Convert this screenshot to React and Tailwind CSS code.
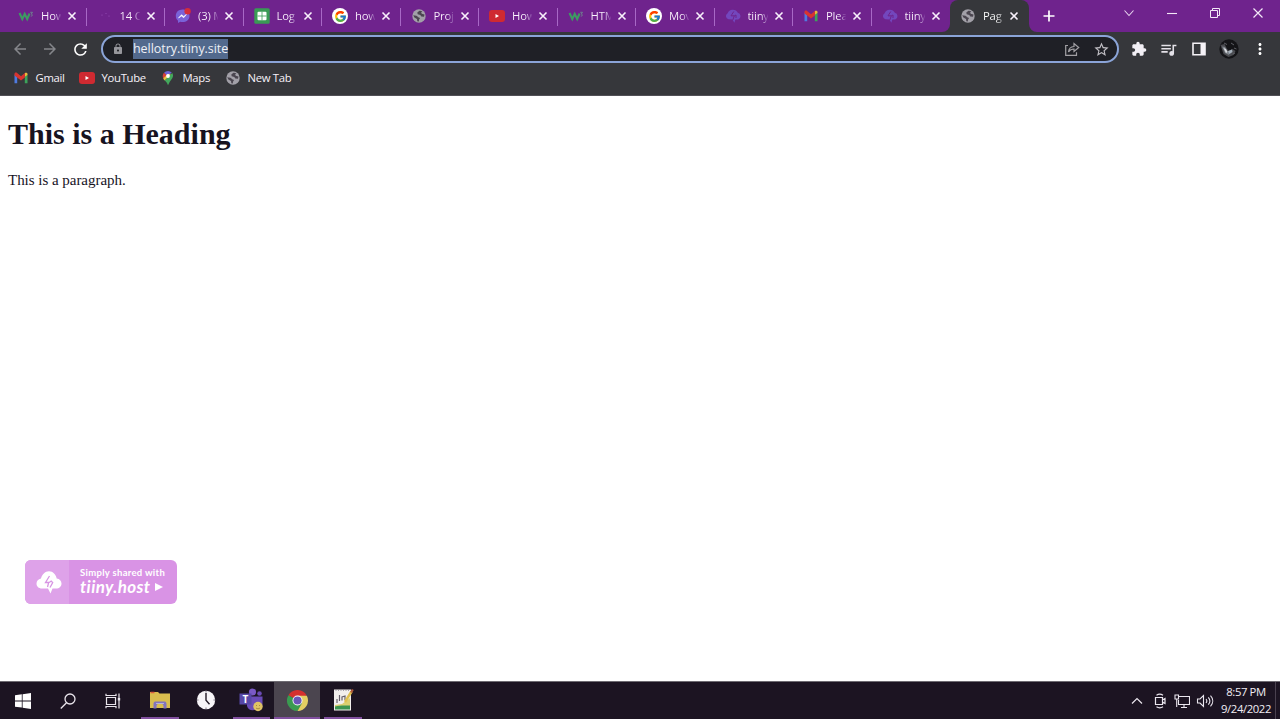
import React from 'react';
import {
  MdArrowBack,
  MdArrowForward,
  MdRefresh,
  MdLock,
  MdStarBorder,
  MdExtension,
  MdQueueMusic,
  MdMoreVert,
} from 'react-icons/md';
import { FcGoogle } from 'react-icons/fc';

/* ---------- favicons ---------- */

const W3Icon = () => (
  <svg viewBox="0 0 16 16" className="h-4 w-4" fill="none" stroke="#3d9a62" strokeWidth="2.1">
    <path d="M1.500 5 4.300 11l2.400-5L9.200 11l2.400-5.500" />
    <path d="M12.300 4.300h2.200L13.300 6c1.500.3 1.400 2.300-.5 2.200" stroke="#6f7f8f" strokeWidth="1" />
  </svg>
);

const DotsIcon = () => (
  <svg viewBox="0 0 16 16" className="h-4 w-4" fill="#9a52ba">
    <circle cx="5" cy="7" r=".6" />
    <circle cx="9" cy="5.500" r=".5" />
    <circle cx="12" cy="8" r=".6" />
  </svg>
);

const MessengerIcon = () => (
  <svg viewBox="0 0 16 16" className="h-4 w-4">
    <path d="M7.500 1.500C3.500 1.500.8 4.300.8 8c0 2 .9 3.600 2.200 4.700V15l2.200-1.200c4.800 1.200 9.300-1.500 9.300-5.900 0-3.700-3-6.400-7-6.400z" fill="#7a62d8" />
    <path d="m3.500 10 3-3.300 2.200 1.700 3-2.200-3 3.500-2.200-1.700z" fill="#fff" stroke="#fff" strokeWidth=".6" />
    <circle cx="12.600" cy="3.200" r="3.200" fill="#d32d3b" />
  </svg>
);

const SheetIcon = () => (
  <svg viewBox="0 0 16 16" className="h-4 w-4">
    <rect x=".3" y=".3" width="15.400" height="15.400" rx="1.500" fill="#3a9a55" />
    <rect x="3.500" y="3.700" width="9" height="8.600" rx="1" fill="#fff" />
    <path d="M8 3.700v8.600M3.500 8h9" stroke="#3a9a55" strokeWidth=".8" />
  </svg>
);

const GoogleIcon = () => (
  <span className="flex h-4 w-4 items-center justify-center rounded-full bg-white">
    <FcGoogle className="h-[13px] w-[13px]" />
  </span>
);

const YoutubeIcon = () => (
  <svg viewBox="0 0 16 16" className="h-4 w-4">
    <rect x="0" y="2" width="16" height="12" rx="3" fill="#cf2a31" />
    <path d="M6.500 6 10 8l-3.500 2z" fill="#fff" />
  </svg>
);

const GlobeIcon = () => (
  <svg viewBox="0 0 16 16" className="h-4 w-4">
    <circle cx="8" cy="8" r="6.700" fill="#a2a0a8" />
    <path d="M8.500 2.800 6.300 4.500l.4 1.800 2.600.7 1 1.500 2.700.2.500-2.200-2.800-.8-.5-1.500 1.200-.9a6 6 0 0 0-2.900-.5z" fill="#4b4650" />
    <path d="M2.200 7.300l3.300.4 2.200 1.800 1.400.6-1 1.500-.3 1.900-1.500-.2-.3-2.200-2.600-1.500z" fill="#4b4650" />
  </svg>
);

const TiinyIcon = () => (
  <svg viewBox="0 0 16 16" className="h-4 w-4">
    <path d="M3.500 11.300A3.300 3.300 0 0 1 2.600 5.200 5.600 5.600 0 0 1 12.800 4.700a3.500 3.500 0 0 1 .4 6.700l-2.800.2-1 3.200-2-3.400z" fill="#7347bd" />
    <path d="M8.800 3.500 6 7.800h3.300L7.800 12M9.300 7.800l1.700-.8v3" stroke="#6f238d" strokeWidth="1" fill="none" />
  </svg>
);

const GmailIcon = () => (
  <svg viewBox="0 0 16 16" className="h-4 w-4">
    <path d="M1.500 4.500v8.700h2.700V6z" fill="#4f7be0" />
    <path d="M14.500 4.500v8.700h-2.700V6z" fill="#3ca35a" />
    <path d="M11.800 3.800v3l2.700-1.700V4c0-1.300-1.700-1.700-2.700-.9z" fill="#e9b93c" />
    <path d="M1.500 4c0-1.300 1.600-1.800 2.600-1L8 6.200 11.900 3v4.500L8 10.600 4.100 7.600 1.500 5.600z" fill="#d8342f" />
  </svg>
);

const MapsIcon = () => (
  <svg viewBox="0 0 16 16" className="h-4 w-4">
    <path d="M8 1a5.300 5.300 0 0 0-4 1.800L7 6l4.800-3.300A5.300 5.300 0 0 0 8 1z" fill="#6f63d6" />
    <path d="M4 2.800A5.300 5.300 0 0 0 3.300 8.500L7 5.300z" fill="#d8403a" />
    <path d="M3.200 8.300c.3.800.9 1.600 1.500 2.300L11 4.500 8 4z" fill="#e8c040" />
    <path d="M12.200 3.100c2.200 3.600-.4 6-1.900 7.900-1 1.200-1.300 2.500-2.300 4.200-.8-2-1.700-3.200-3.300-4.600z" fill="#43a85c" />
    <circle cx="8" cy="6" r="1.900" fill="#fff" />
  </svg>
);

const CloseIcon = ({ className = '' }) => (
  <svg viewBox="0 0 10 10" className={`h-2.5 w-2.5 ${className}`} fill="none" stroke="#f8f0fb" strokeWidth="1.600">
    <path d="M1.500 1.500l7 7M8.500 1.500l-7 7" />
  </svg>
);

const tabs = [
  { icon: W3Icon, title: 'How' },
  { icon: DotsIcon, title: '14 C' },
  { icon: MessengerIcon, title: '(3) M' },
  { icon: SheetIcon, title: 'Log' },
  { icon: GoogleIcon, title: 'how' },
  { icon: GlobeIcon, title: 'Proj' },
  { icon: YoutubeIcon, title: 'How' },
  { icon: W3Icon, title: 'HTM' },
  { icon: GoogleIcon, title: 'Mov' },
  { icon: TiinyIcon, title: 'tiiny' },
  { icon: GmailIcon, title: 'Plea' },
  { icon: TiinyIcon, title: 'tiiny' },
  { icon: GlobeIcon, title: 'Pag', active: true },
];

const bookmarks = [
  { icon: GmailIcon, title: 'Gmail', width: 'w-[66px]' },
  { icon: YoutubeIcon, title: 'YouTube', width: 'w-[81px]' },
  { icon: MapsIcon, title: 'Maps', width: 'w-[65px]' },
  { icon: GlobeIcon, title: 'New Tab', width: 'w-[80px]' },
];

/* ---------- browser chrome ---------- */

const Tab = ({ icon: Icon, title, active, last }) => (
  <div
    className={`relative flex h-8 w-[78.500px] shrink-0 items-center pl-2.5 ${
      active ? 'rounded-t-lg bg-[#36373b]' : ''
    }`}
  >
    <Icon />
    <span
      className={`ml-[7px] w-[20px] overflow-hidden whitespace-nowrap bg-gradient-to-r from-65% bg-clip-text text-[11.300px] tracking-[-0.200px] text-transparent ${
        active ? 'from-white to-[#8b8c90]' : 'from-[#fbf3fd] to-[#7a3399]'
      }`}
    >
      {title}
    </span>
    <CloseIcon className="ml-[6px]" />
    {!active && !last && <span className="absolute right-0 top-2 h-[18px] w-px bg-[#a868c6]" />}
    {active && (
      <>
        <svg viewBox="0 0 8 8" className="absolute -left-2 bottom-0 h-2 w-2" fill="#36373b">
          <path d="M8 0v8H0a8 8 0 0 0 8-8z" />
        </svg>
        <svg viewBox="0 0 8 8" className="absolute -right-2 bottom-0 h-2 w-2" fill="#36373b">
          <path d="M0 0v8h8a8 8 0 0 1-8-8z" />
        </svg>
      </>
    )}
  </div>
);

const TabStrip = () => (
  <div className="flex h-8 shrink-0 bg-[#6f238d] pl-2">
    {tabs.map((tab, i) => (
      <Tab key={i} {...tab} last={i === tabs.length - 2} />
    ))}
    <svg viewBox="0 0 12 12" className="ml-[14px] mt-[10px] h-3 w-3" stroke="#fff" strokeWidth="1.700">
      <path d="M6 .5v11M.5 6h11" />
    </svg>
    <div className="ml-auto flex h-[26px] items-center gap-[31px] pr-4">
      <svg viewBox="0 0 12 12" className="h-3 w-3" fill="none" stroke="#e7d3ee" strokeWidth="1.100">
        <path d="M1.500 3.500 6 8.500l4.500-5" />
      </svg>
      <svg viewBox="0 0 12 12" className="h-3 w-3" fill="none" stroke="#f3e8f7" strokeWidth="1.100">
        <path d="M1 6.500h10" />
      </svg>
      <svg viewBox="0 0 12 12" className="h-3 w-3" fill="none" stroke="#f3e8f7">
        <path d="M1.500 3.500h7v7h-7zM3.500 3.500v-2h7v7h-2" />
      </svg>
      <svg viewBox="0 0 12 12" className="h-3 w-3" fill="none" stroke="#f3e8f7" strokeWidth="1.200">
        <path d="M1.500 1.500l9 9M10.500 1.500l-9 9" />
      </svg>
    </div>
  </div>
);

const Avatar = () => (
  <svg viewBox="0 0 20 20" className="h-5 w-5">
    <circle cx="10" cy="10" r="9.700" fill="#141417" />
    <path d="M1.500 6l4-1 2 4 2 3 4-2 3 2-2 4-5 2-5-3z" fill="#4a4b50" />
    <path d="M3 7.500l3 .5 2 4 3 1-1 3-4-2z" fill="#7d8289" />
    <path d="M4.500 9l2.500 1 1.500 3-1.500 1z" fill="#d9dbe0" />
    <path d="M9 12l4-1.500.500 2.500-3 2z" fill="#a5b0bb" />
    <path d="M5 4l3 1.500M12 4l3 2M15 9l2.500 1M14 15l2-1" stroke="#5e5f65" />
  </svg>
);

const Toolbar = () => (
  <div className="flex h-[34px] shrink-0 items-center bg-[#36373b] pl-[11px]">
    <div className="flex w-[90px] items-center gap-3">
      <MdArrowBack className="h-[18px] w-[18px] text-[#85868b]" />
      <MdArrowForward className="h-[18px] w-[18px] text-[#85868b]" />
      <MdRefresh className="h-[19px] w-[19px] text-white" stroke="white" />
    </div>
    <div className="flex h-7 w-[1018px] items-center rounded-full border-2 border-[#8ba4d8] bg-[#1f2026] px-[9px]">
      <MdLock className="h-3 w-3 text-[#96969c]" />
      <span className="ml-[9px] flex h-5 items-center bg-[#52698d] text-[12.500px] tracking-[-0.050px] text-[#eef0f6]">
        hellotry.tiiny.site
      </span>
      <svg viewBox="0 0 16 16" className="ml-auto h-4 w-4" fill="none" stroke="#a2a0a4" strokeWidth="1.200">
        <path d="M4 4.500H1.700v9.800h10.800v-3" />
        <path d="M4.500 11c.3-3.500 2-5.300 5.500-5.500V2.500l4.700 4-4.700 4V8c-2.500 0-4.300 1-5.500 3z" />
      </svg>
      <MdStarBorder className="-mr-[2px] ml-[13px] h-[17px] w-[17px] text-[#c0bec4]" />
    </div>
    <div className="ml-[12px] flex items-center">
      <MdExtension className="h-4 w-4 text-[#f2eff5]" />
      <MdQueueMusic className="ml-[12px] h-[19px] w-[19px] text-[#e4e1e8]" />
      <svg viewBox="0 0 14 14" className="ml-[14px] h-3.5 w-3.5" fill="none">
        <path d="M1 1.300h12v11.400H1z" stroke="#f5f2f7" strokeWidth="1.600" />
        <path d="M8.500 1H13v12H8.500z" fill="#f5f2f7" />
      </svg>
      <span className="ml-[13px]">
        <Avatar />
      </span>
      <MdMoreVert className="ml-[12px] h-[18px] w-[18px] text-white" />
    </div>
  </div>
);

const BookmarksBar = () => (
  <div className="flex h-[30px] shrink-0 border-b border-[#515056] bg-[#36373b] pb-[5px] pl-[13px]">
    {bookmarks.map(({ icon: Icon, title, width }) => (
      <div key={title} className={`flex items-center gap-[6.500px] ${width}`}>
        <Icon />
        <span className="whitespace-nowrap pt-px text-[11.300px] tracking-[-0.300px] text-[#f6f2f9]">{title}</span>
      </div>
    ))}
  </div>
);

/* ---------- page ---------- */

const SharedBadge = () => (
  <div className="absolute left-[25px] top-[464px] flex h-[44px] w-[152px] overflow-hidden rounded-md bg-[#d993e5] text-white">
    <div className="flex w-[44px] items-center justify-center bg-[#dea2e9] pl-1">
      <svg viewBox="0 0 26 24" className="h-6 w-[26px]">
        <path d="M6 18.500C2.500 18.500.5 16.200.5 13.500.5 11 2.300 9 5 8.500 6 4.500 9 1.200 13 1.200c4 0 7 3.400 7.700 7.200 3 .3 4.800 2.500 4.800 5.100 0 2.900-2 5-5.500 5h-3.500L14.500 23.500l-2.500-5z" fill="#fff" />
        <path d="M13.500 6 9.500 12.500h3.200L11.500 17M13.200 12.500l2-1.500 1.500 1.500-2.700 5" stroke="#d795e3" strokeWidth="1.300" fill="none" />
      </svg>
    </div>
    <div className="pl-[11px] pt-[8px] font-['Lato',sans-serif]">
      <div className="whitespace-nowrap text-[9.500px] font-bold leading-[10px] tracking-[0.300px]">Simply shared with</div>
      <div className="flex items-center gap-[5px] text-[17px] font-bold italic leading-[18px] tracking-[0.400px]">
        tiiny.host
        <svg viewBox="0 0 8 8" className="h-2 w-2" fill="#fff">
          <path d="M0 0l8 4-8 4z" />
        </svg>
      </div>
    </div>
  </div>
);

const Page = () => (
  <main className="relative flex-1 bg-white px-2 font-['Liberation_Serif',serif] text-[#17131f]">
    <h1 className="pt-5 text-[30px] font-bold leading-[35px]">This is a Heading</h1>
    <p className="mt-[21px] text-[15px] leading-[17px] tracking-[-0.030px]">This is a paragraph.</p>
    <SharedBadge />
  </main>
);

/* ---------- taskbar ---------- */

const StartIcon = () => (
  <svg viewBox="0 0 16 16" className="h-4 w-4" fill="#fff">
    <path d="M0 2.300 6.800 1.300v6.200H0zM7.600 1.200 16 0v7.500H7.600zM0 8.400h6.800v6.200L0 13.700zM7.600 8.400H16V16l-8.400-1.200z" />
  </svg>
);

const SearchIcon = () => (
  <svg viewBox="0 0 16 16" className="h-4 w-4" fill="none" stroke="#e9e5ec" strokeWidth="1.300">
    <circle cx="10" cy="6" r="5" />
    <path d="M6.500 9.800.8 15.500" />
  </svg>
);

const TaskViewIcon = () => (
  <svg viewBox="0 0 16 16" className="h-4 w-4" fill="none" stroke="#e9e5ec" strokeWidth="1.200">
    <path d="M1.500 4.500h9v7h-9zM1 .8v1.700h10V.8M1 15.200v-1.700h10v1.700M14 .5v15" />
    <path d="M12.800 5h2.400v2.500h-2.400z" fill="#e9e5ec" stroke="none" />
  </svg>
);

const ExplorerIcon = () => (
  <svg viewBox="0 0 22 20" className="h-5 w-[22px]">
    <path d="M1 2h8l1.500 1.500H21V18H1z" fill="#d9bd4e" />
    <path d="M1.500 2.500h4" stroke="#d85b3c" strokeWidth="1.500" />
    <path d="M4.500 18.500V14c0-2 1-2.500 2.500-2.500h8c1.500 0 2.500.5 2.500 2.500v4.500h-3V16a3.500 2.500 0 0 0-7 0v2.500z" fill="#8272bd" />
    <path d="M7 13.500h8" stroke="#b9b3d6" />
  </svg>
);

const ClockIcon = () => (
  <svg viewBox="0 0 20 20" className="h-5 w-5">
    <circle cx="10" cy="10" r="9.200" fill="#f7f5f8" />
    <path d="M10 3v7.300l3.500 4" stroke="#221a26" strokeWidth="1.400" fill="none" />
    <path d="M10 1v1.500M10 17.500V19M1 10h1.500M17.500 10H19" stroke="#77707c" />
  </svg>
);

const TeamsIcon = () => (
  <svg viewBox="0 0 24 24" className="h-6 w-6">
    <circle cx="13.500" cy="4" r="3.600" fill="#7b5ac6" />
    <circle cx="20.500" cy="5.500" r="2.300" fill="#6a4ab5" />
    <path d="M8 8.500h15.500V16a4 4 0 0 1-4 4H18c-2 3.500-9 3-10-2z" fill="#6b4cb8" />
    <path d="M.5 5.500h12v11H.5z" fill="#5748a8" />
    <text x="6.500" y="14.700" textAnchor="middle" fontSize="10" fontWeight="bold" fill="#fff">T</text>
    <circle cx="19" cy="18.500" r="4.700" fill="#dec266" />
    <path d="M17 17.500h1M20 17.500h1M17 20c1 1 3 1 4 0" stroke="#9a7c3a" strokeWidth=".8" fill="none" />
  </svg>
);

const ChromeIcon = () => (
  <svg viewBox="0 0 22 22" className="h-[21px] w-[21px]">
    <path d="M11 11 1.470 5.500A11 11 0 0 1 20.530 5.500z" fill="#d5302f" />
    <path d="M11 11 1.470 5.500A11 11 0 0 0 11 22l4.800-8.300z" fill="#3a9a50" />
    <path d="M11 6h9.800A11 11 0 0 1 11 22l4.800-8.300z" fill="#e3ce62" />
    <circle cx="11" cy="11" r="5.200" fill="#fff" />
    <circle cx="11" cy="11" r="4.300" fill="#6a55b8" />
  </svg>
);

const NotepadIcon = () => (
  <svg viewBox="0 0 22 24" className="h-6 w-[22px]">
    <path d="M2 1.500h17v21H2z" fill="#f2efed" />
    <path d="M3 17l7-1 8-6v9H3z" fill="#dcd070" />
    <path d="M3 18.500c5-1.500 10-1 15-1v4H3z" fill="#3d9550" />
    <path d="M5 15v-4M7.500 13V7M10 12.500V9l3-1v4" stroke="#66606b" strokeWidth="1.200" fill="none" />
    <path d="m13 14 6.500-10.500" stroke="#dfc04f" strokeWidth="2.500" />
    <path d="m19 4.500 1.800-3" stroke="#b05a3c" strokeWidth="2.200" />
    <path d="M3.500 2.500h14" stroke="#a5a0aa" strokeDasharray="1 1.500" />
  </svg>
);

const systemButtons = [
  { name: 'start', icon: StartIcon },
  { name: 'search', icon: SearchIcon },
  { name: 'task-view', icon: TaskViewIcon },
];

const apps = [
  { name: 'explorer', icon: ExplorerIcon, open: true },
  { name: 'clock', icon: ClockIcon },
  { name: 'teams', icon: TeamsIcon, open: true },
  { name: 'chrome', icon: ChromeIcon, open: true, active: true },
  { name: 'notepad', icon: NotepadIcon, open: true },
];

const Tray = () => (
  <div className="ml-auto flex items-center">
    <svg viewBox="0 0 12 12" className="h-3 w-3" fill="none" stroke="#eae6ee" strokeWidth="1.200">
      <path d="M1 8.500 6 3.500l5 5" />
    </svg>
    <svg viewBox="0 0 16 16" className="ml-[9px] h-4 w-4" fill="none" stroke="#eae6ee" strokeWidth="1.200">
      <path d="M3.500 4.500h7v7h-7zM10.500 7 13 5.500v5L10.500 9M4.500 2.200c2-1.300 4.500-1.300 6.500 0M4.500 13.800c2 1.300 4.500 1.300 6.500 0" />
    </svg>
    <svg viewBox="0 0 16 16" className="ml-[6px] h-4 w-4" fill="none" stroke="#eae6ee" strokeWidth="1.100">
      <path d="M5 3.500h10.500v8H4.500V7M10 11.500v3M7 14.500h6M1 2h3.500v4H1zM2.700 6v8" />
    </svg>
    <svg viewBox="0 0 18 16" className="ml-[6px] h-4 w-[18px]" fill="none" stroke="#eae6ee" strokeWidth="1.100">
      <path d="M1.500 6h2.500l3.500-3.500v11L4 10H1.500zM10 6c1 1.200 1 2.800 0 4M12.300 4.300c2 2.300 2 5.100 0 7.400M14.500 2.700c3 3.200 3 7.400 0 10.600" />
    </svg>
    <div className="ml-[6px] w-[52px] pb-[2px] text-center text-[11.300px] leading-[17px] tracking-[-0.400px] text-[#f1edf4]">
      <div className="whitespace-nowrap">8:57 PM</div>
      <div className="whitespace-nowrap">9/24/2022</div>
    </div>
    <span className="ml-[3px] mr-[4px] h-full w-px bg-[#4a414f]" />
  </div>
);

const Taskbar = () => (
  <footer className="flex h-[38px] shrink-0 border-t border-[#6e6b72] bg-[#1c1422]">
    <div className="flex w-[137px] shrink-0 pr-[2px]">
      {systemButtons.map(({ name, icon: Icon }) => (
        <div key={name} className="flex flex-1 items-center justify-center">
          <Icon />
        </div>
      ))}
    </div>
    {apps.map(({ name, icon: Icon, open, active }) => (
      <div
        key={name}
        className={`relative flex w-[45.800px] shrink-0 items-center justify-center pb-px ${active ? 'bg-[#4b454f]' : ''}`}
      >
        <Icon />
        {open && (
          <span className={`absolute bottom-0 h-[2px] bg-[#81509f] ${active ? 'inset-x-0' : 'inset-x-[4px]'}`} />
        )}
      </div>
    ))}
    <Tray />
  </footer>
);

export default function App() {
  return (
    <div className="flex h-[719px] w-[1280px] flex-col overflow-hidden font-['Open_Sans','Noto_Sans',sans-serif]">
      <TabStrip />
      <Toolbar />
      <BookmarksBar />
      <Page />
      <Taskbar />
    </div>
  );
}
